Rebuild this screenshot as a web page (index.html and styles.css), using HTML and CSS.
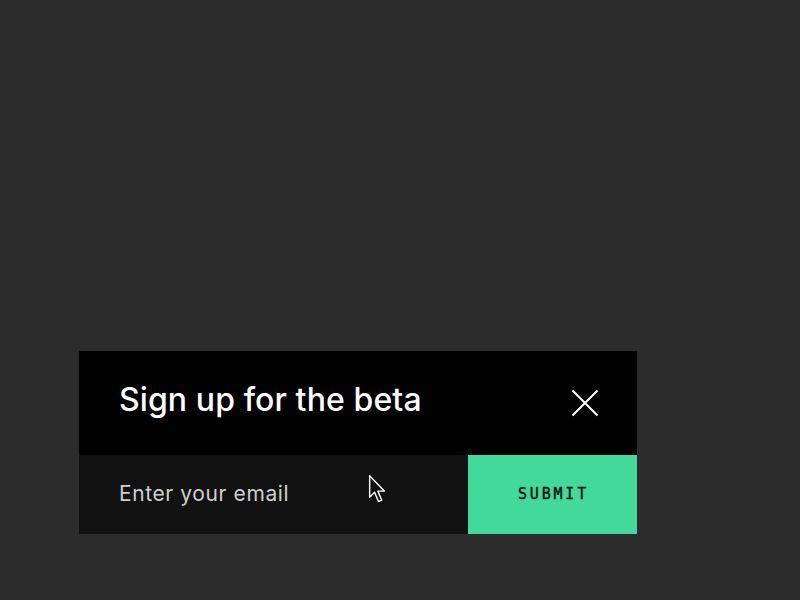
FILE: index.html
```html
<!DOCTYPE html>
<html>
<head>
<meta charset="utf-8">
<link rel="stylesheet" href="styles.css">
</head>
<body>
<div class="page">
  <div class="dialog">
    <div class="header">
      <h1 class="title">Sign up for the beta</h1>
      <button class="close" aria-label="Close">
        <svg width="28" height="28" viewBox="0 0 28 28"><path d="M1.5 1.5 L26.5 26.5 M26.5 1.5 L1.5 26.5" stroke="#fff" stroke-width="2" fill="none"/></svg>
      </button>
    </div>
    <div class="row">
      <div class="input">
        <span class="placeholder">Enter your email</span>
        <svg class="cursor" width="22" height="31" viewBox="0 0 20 28"><path d="M1.5 1.5 L1.5 21 L6 16.5 L9.5 25 L12.5 23.7 L9 15.5 L15 15.5 Z" fill="#111" stroke="#fff" stroke-width="1.3" stroke-linejoin="round"/></svg>
      </div>
      <button class="submit">SUBMIT</button>
    </div>
  </div>
</div>
</body>
</html>
```
FILE: styles.css
```css
html, body {
  margin: 0;
  padding: 0;
  background: #2c2c2c;
  width: 800px;
  height: 600px;
  overflow: hidden;
}
.page {
  padding: 351px 0 0 79px;
}
.dialog {
  width: 558px;
  display: flex;
  flex-direction: column;
}
.header {
  height: 104px;
  background: #020202;
  display: flex;
  align-items: center;
  justify-content: space-between;
  padding: 0 38px 0 40px;
  box-sizing: border-box;
}
.title {
  margin: 0;
  font-family: Inter, "Liberation Sans", sans-serif;
  font-weight: 500;
  font-size: 32px;
  letter-spacing: 0.1px;
  color: #fff;
  padding-bottom: 8px;
}
.close {
  background: none;
  border: 0;
  padding: 0;
  width: 28px;
  height: 28px;
  display: flex;
}
.row {
  display: flex;
  height: 79px;
}
.input {
  position: relative;
  flex: 1;
  background: #111111;
  display: flex;
  align-items: center;
  padding-left: 40px;
}
.placeholder {
  font-family: Inter, "Liberation Sans", sans-serif;
  font-size: 21px;
  color: #cfcfcf;
  letter-spacing: 0.6px;
  padding-bottom: 2px;
}
.cursor {
  position: absolute;
  left: 289px;
  top: 19px;
}
.submit {
  width: 169px;
  background: #43d99b;
  border: 0;
  font-family: "DejaVu Sans Mono", monospace;
  font-weight: normal;
  font-size: 15px;
  letter-spacing: 2.8px;
  color: #111;
  -webkit-text-stroke: 0.4px #111;
  padding: 0 0 1px 2px;
}
```
